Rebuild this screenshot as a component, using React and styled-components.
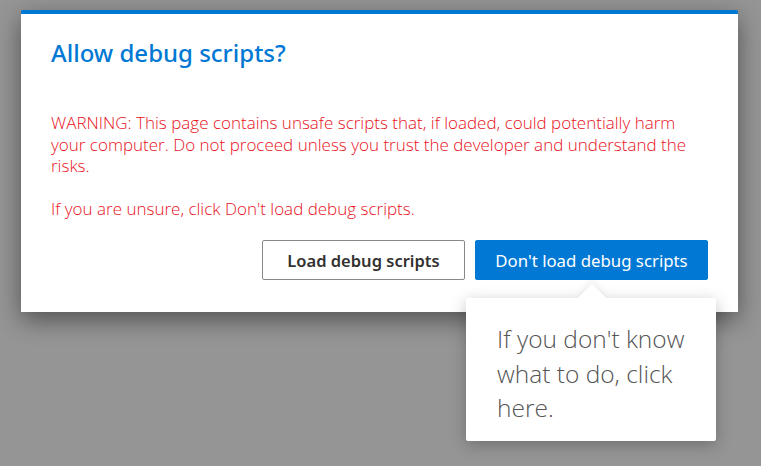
import React from 'react';
import styled, { createGlobalStyle } from 'styled-components';

const GlobalStyle = createGlobalStyle`
  html, body {
    margin: 0;
    padding: 0;
    background: #959595;
    font-family: 'Noto Sans', 'Open Sans', sans-serif;
  }
`;

const Page = styled.div`
  width: 761px;
  height: 466px;
  padding: 10px 0 0 21px;
  box-sizing: border-box;
  position: relative;
  overflow: hidden;
`;

const Dialog = styled.section`
  position: relative;
  width: 717px;
  height: 302px;
  box-sizing: border-box;
  background: #fff;
  border-top: 4px solid #0078d4;
  border-radius: 2px 2px 0 0;
  box-shadow: 0 8px 24px rgba(0, 0, 0, 0.45);
  padding: 19px 30px 32px 30px;
  display: flex;
  flex-direction: column;
`;

const Title = styled.h1`
  margin: 0;
  font-size: 24px;
  font-weight: 500;
  line-height: 40px;
  color: #0078d4;
`;

const Body = styled.div`
  margin-top: 39px;
  color: #e81123;
  font-family: 'Open Sans', 'Noto Sans', sans-serif;
  font-weight: 300;
  font-size: 17px;
  line-height: 21.5px;
  letter-spacing: 0;
`;

const Para = styled.p`
  margin: 0 0 21px 0;
`;

const Actions = styled.div`
  margin-top: auto;
  display: flex;
  justify-content: flex-end;
  gap: 10px;
`;

const Button = styled.button`
  height: 40px;
  box-sizing: border-box;
  padding: 0 10px;
  border-radius: 2px;
  font-family: inherit;
  font-size: ${(p) => (p.primary ? 16.8 : 16.5)}px;
  font-weight: ${(p) => (p.primary ? 400 : 600)};
  border: 1px solid ${(p) => (p.primary ? '#0078d4' : '#8a8886')};
  background: ${(p) => (p.primary ? '#0078d4' : '#fff')};
  color: ${(p) => (p.primary ? '#fff' : '#323130')};
  width: ${(p) => p.w}px;
`;

const Callout = styled.div`
  position: absolute;
  left: 466px;
  top: 298px;
  width: 250px;
  height: 143px;
  box-sizing: border-box;
  background: #fff;
  border-radius: 2px;
  box-shadow: 0 4px 16px rgba(0, 0, 0, 0.25);
  padding: 24px 20px 0 31px;
  font-family: 'Open Sans', 'Noto Sans', sans-serif;
  font-weight: 300;
  font-size: 24.5px;
  line-height: 34.5px;
  color: #555;

  &::before {
    content: '';
    position: absolute;
    top: -10px;
    left: 116px;
    width: 20px;
    height: 20px;
    background: #fff;
    transform: rotate(45deg);
    box-shadow: -3px -3px 6px rgba(0, 0, 0, 0.06);
  }
`;

const CalloutText = styled.p`
  position: relative;
  margin: 0;
`;

export default function App() {
  return (
    <>
      <GlobalStyle />
      <Page>
        <Dialog>
          <Title>Allow debug scripts?</Title>
          <Body>
            <Para>
              WARNING: This page contains unsafe scripts that, if loaded, could potentially harm
              your computer. Do not proceed unless you trust the developer and understand the
              risks.
            </Para>
            <Para>If you are unsure, click Don't load debug scripts.</Para>
          </Body>
          <Actions>
            <Button w={203}>Load debug scripts</Button>
            <Button primary w={233}>Don't load debug scripts</Button>
          </Actions>
        </Dialog>
        <Callout>
          <CalloutText>If you don't know what to do, click here.</CalloutText>
        </Callout>
      </Page>
    </>
  );
}
